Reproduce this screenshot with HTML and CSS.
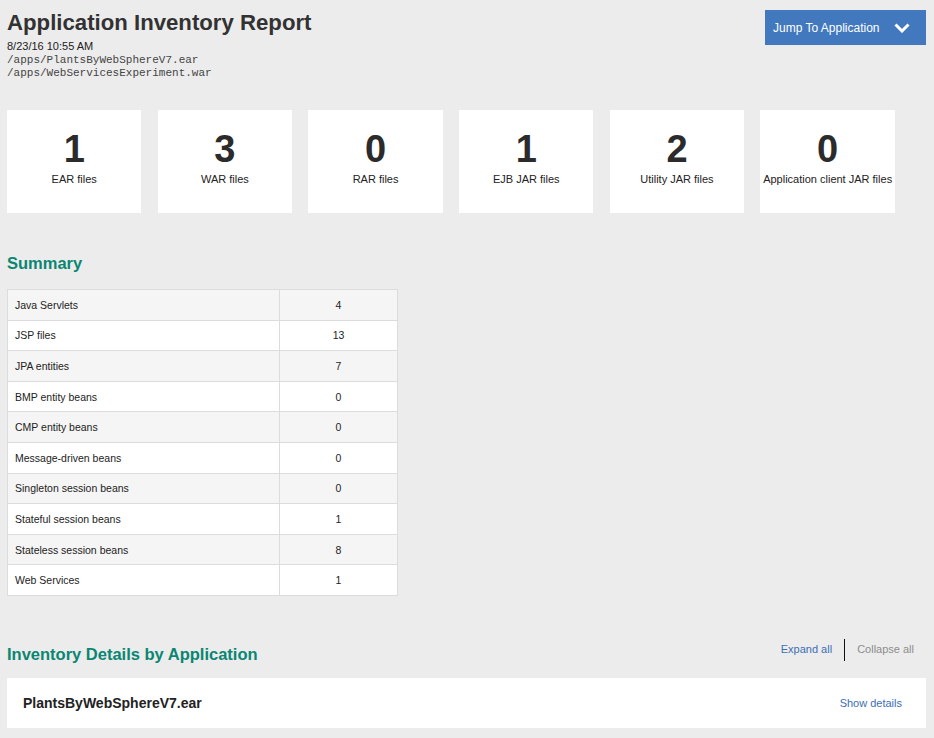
FILE: index.html
```html
<!DOCTYPE html>
<html>
<head>
<meta charset="utf-8">
<link rel="stylesheet" href="styles.css">
</head>
<body>
<header class="top">
  <div class="head-text">
    <h1 class="title">Application Inventory Report</h1>
    <div class="date">8/23/16 10:55 AM</div>
    <div class="path">/apps/PlantsByWebSphereV7.ear</div>
    <div class="path">/apps/WebServicesExperiment.war</div>
  </div>
  <button class="jump">
    <span>Jump To Application</span>
    <svg class="chev" width="16" height="10" viewBox="0 0 16 10"><path d="M1.5 1.5 L8 8 L14.5 1.5" fill="none" stroke="#fff" stroke-width="3"/></svg>
  </button>
</header>

<section class="cards">
  <div class="card"><div class="num">1</div><div class="lbl">EAR files</div></div>
  <div class="card"><div class="num">3</div><div class="lbl">WAR files</div></div>
  <div class="card"><div class="num">0</div><div class="lbl">RAR files</div></div>
  <div class="card"><div class="num">1</div><div class="lbl">EJB JAR files</div></div>
  <div class="card"><div class="num">2</div><div class="lbl">Utility JAR files</div></div>
  <div class="card"><div class="num">0</div><div class="lbl">Application client JAR files</div></div>
</section>

<h2 class="section-title summary-title">Summary</h2>
<table class="summary">
  <tr><td class="name">Java Servlets</td><td class="val">4</td></tr>
  <tr><td class="name">JSP files</td><td class="val">13</td></tr>
  <tr><td class="name">JPA entities</td><td class="val">7</td></tr>
  <tr><td class="name">BMP entity beans</td><td class="val">0</td></tr>
  <tr><td class="name">CMP entity beans</td><td class="val">0</td></tr>
  <tr><td class="name">Message-driven beans</td><td class="val">0</td></tr>
  <tr><td class="name">Singleton session beans</td><td class="val">0</td></tr>
  <tr><td class="name">Stateful session beans</td><td class="val">1</td></tr>
  <tr><td class="name">Stateless session beans</td><td class="val">8</td></tr>
  <tr><td class="name">Web Services</td><td class="val">1</td></tr>
</table>

<div class="details-head">
  <h2 class="section-title">Inventory Details by Application</h2>
  <div class="toggles">
    <a class="expand">Expand all</a>
    <span class="sep"></span>
    <a class="collapse">Collapse all</a>
  </div>
</div>
<div class="app">
  <div class="app-name">PlantsByWebSphereV7.ear</div>
  <a class="show">Show details</a>
</div>
</body>
</html>
```
FILE: styles.css
```css
html, body { margin: 0; padding: 0; }
body {
  background: #ececec;
  font-family: "Liberation Sans", Arial, sans-serif;
  color: #333;
  padding: 0 8px 0 7px;
}
.top {
  display: flex;
  justify-content: space-between;
  align-items: flex-start;
}
.head-text { padding-top: 10px; }
.title {
  margin: 0;
  font-size: 22.2px;
  font-weight: bold;
  line-height: 26px;
  color: #323232;
}
.date { font-size: 11px; line-height: 13px; margin-top: 4px; color: #222; }
.path { font-family: "Liberation Mono", monospace; font-size: 11px; line-height: 13px; color: #444; }
.date + .path { margin-top: 1px; }
.jump {
  margin-top: 10px;
  width: 161px;
  height: 35px;
  background: #4178be;
  border: 0;
  color: #fff;
  font-family: "Liberation Sans", Arial, sans-serif;
  font-size: 12px;
  display: flex;
  align-items: center;
  justify-content: space-between;
  padding: 0 16px 0 8px;
}
.cards {
  display: flex;
  gap: 16.3px;
  margin-top: 30px;
}
.card {
  width: 134.4px;
  height: 103px;
  background: #fff;
  display: flex;
  flex-direction: column;
  align-items: center;
  box-sizing: border-box;
  padding-top: 20px;
}
.num { font-size: 38px; font-weight: bold; line-height: 38px; color: #2b2b2b; }
.lbl { font-size: 11px; line-height: 14px; margin-top: 4px; color: #222; white-space: nowrap; }
.section-title {
  margin: 0;
  color: #0a8672;
  font-size: 16.5px;
  font-weight: bold;
  line-height: 20px;
}
.summary-title { margin-top: 40px; }
.summary {
  margin-top: 16px;
  border-collapse: collapse;
  width: 391px;
  font-size: 10.5px;
  color: #222;
}
.summary td {
  border: 1px solid #dcdcdc;
  height: 29.6px;
  padding: 0;
}
.summary tr:nth-child(odd) td { background: #f5f5f5; }
.summary tr:nth-child(even) td { background: #fff; }
.summary .name { width: 264px; padding-left: 7px; }
.summary .val { text-align: center; }
.details-head {
  display: flex;
  justify-content: space-between;
  align-items: flex-start;
  margin-top: 43px;
}
.details-head .section-title { margin-top: 5px; }
.toggles { display: flex; align-items: center; font-size: 11px; padding-right: 12px; }
.expand { color: #3b6fb6; position: relative; top: -1px; }
.collapse { color: #8c8c8c; position: relative; top: -1px; }
.sep { width: 1px; height: 22px; background: #111; margin: 0 12px; }
.app {
  margin-top: 14px;
  background: #fff;
  height: 50px;
  display: flex;
  align-items: center;
  justify-content: space-between;
  padding: 0 24px 0 16px;
}
.app-name { font-size: 14px; font-weight: bold; color: #222; }
.show { font-size: 11px; color: #3b6fb6; }
```
